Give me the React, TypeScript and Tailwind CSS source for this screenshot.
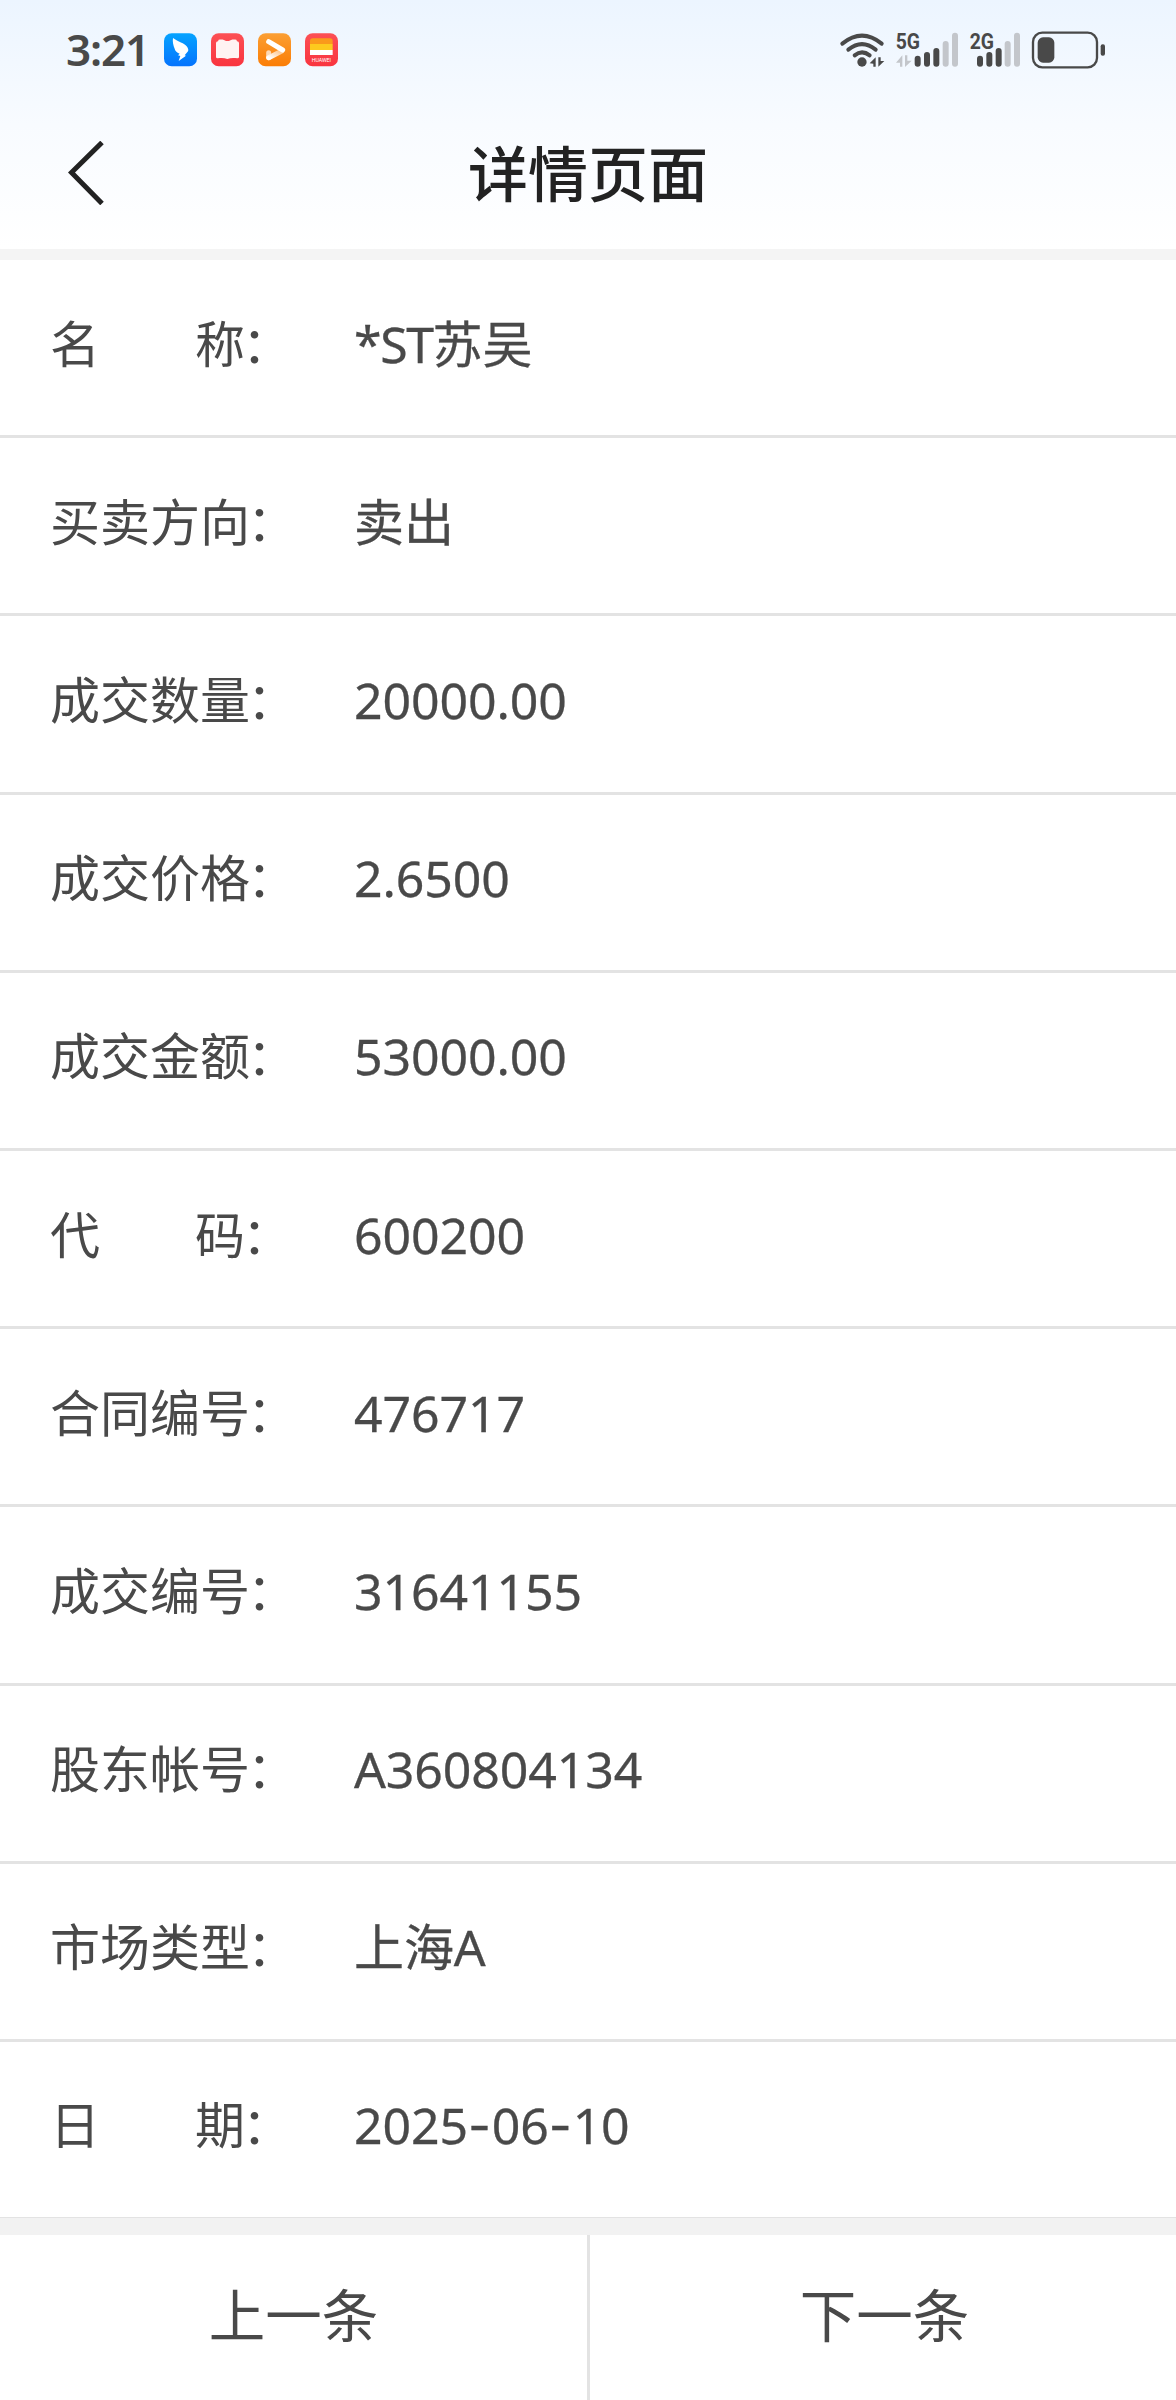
import type { ReactNode } from "react";

interface DetailRow {
    label: string;
    value: ReactNode;
}

const Dash = () => <span className="font-['Inter'] tracking-[0.8px]">-</span>;

const rows: DetailRow[] = [
    { label: "名称", value: <><span className="tracking-[-1.4px]">*ST</span>苏吴</> },
    { label: "买卖方向", value: "卖出" },
    { label: "成交数量", value: "20000.00" },
    { label: "成交价格", value: "2.6500" },
    { label: "成交金额", value: "53000.00" },
    { label: "代码", value: "600200" },
    { label: "合同编号", value: "476717" },
    { label: "成交编号", value: "31641155" },
    { label: "股东帐号", value: "A360804134" },
    { label: "市场类型", value: "上海A" },
    { label: "日期", value: <>2025<Dash />06<Dash />10</> },
];

// Notification icons on the left of the status bar
function AppIcons() {
    return (
        <svg width="174" height="34" viewBox="0 0 522 102" className="ml-[22px]">
            <defs>
                <linearGradient id="blue" x1="0" y1="0" x2="0" y2="1">
                    <stop offset="0" stopColor="#05a3ff" />
                    <stop offset="1" stopColor="#0573fd" />
                </linearGradient>
                <linearGradient id="red" x1="0" y1="0" x2="0" y2="1">
                    <stop offset="0" stopColor="#fc5055" />
                    <stop offset="1" stopColor="#f9343f" />
                </linearGradient>
                <linearGradient id="orange" x1="0" y1="0" x2="0" y2="1">
                    <stop offset="0" stopColor="#fb9f34" />
                    <stop offset="1" stopColor="#fb7d05" />
                </linearGradient>
                <linearGradient id="fold" x1="0" y1="1" x2="1" y2="0">
                    <stop offset="0" stopColor="#fff" />
                    <stop offset="1" stopColor="#fdc48a" />
                </linearGradient>
            </defs>
            <rect x="0" y="1" width="99" height="99" rx="23" fill="url(#blue)" />
            <path d="M27 15 C42 26 62 31 68 40 C73 47 74 51 72 55 L62 67 L66 68 L44 84 L49 69 L42 67 L47 62 C38 58 33 53 32 47 C28 38 25 26 27 15Z" fill="#fff" />
            <rect x="141" y="1" width="99" height="99" rx="23" fill="url(#red)" />
            <path d="M156 30 Q156 25 162 25 L164 20 C174 18 181 20 186 24 H195 C200 20 207 18 217 20 L219 25 Q225 25 225 30 V72 Q225 76 220 76 C210 74 199 74 190 78 C181 74 171 74 161 76 Q156 76 156 72Z" fill="#fff3f2" />
            <rect x="282" y="1" width="99" height="99" rx="23" fill="url(#orange)" />
            <path d="M314 59 V74" fill="none" stroke="#fdd9b5" strokeWidth="15" strokeLinecap="round" />
            <path d="M314 74 L352 55" fill="none" stroke="url(#fold)" strokeWidth="15" strokeLinecap="round" />
            <path d="M314 26 L356 51" fill="none" stroke="#fff" strokeWidth="15" strokeLinecap="round" />
            <rect x="423" y="1" width="99" height="99" rx="23" fill="url(#red)" />
            <path d="M438 34 V24 Q438 16 446 16 H498 Q506 16 506 24 V34Z" fill="#fa9a1b" />
            <rect x="438" y="33" width="68" height="18" fill="#fdca1e" />
            <rect x="438" y="51" width="68" height="15" fill="#fff" />
            <text x="443" y="88" fill="#fff" fontFamily="Roboto" fontSize="17" textLength="58" lengthAdjust="spacingAndGlyphs">HUAWEI</text>
        </svg>
    );
}

// Wifi, two SIM signals and battery
function SystemIcons() {
    return (
        <svg width="266" height="38" viewBox="0 0 798 114" fill="#494949" className="overflow-visible">
            <g fill="none" stroke="#494949" strokeWidth="12" strokeLinecap="round">
                <path d="M7 38 Q66 -10 125 38" />
                <path d="M25 56 Q66 23 107 56" />
                <path d="M44 73 Q66 55 89 73" />
            </g>
            <circle cx="66" cy="93" r="14" />
            <path d="M89 97 L107 79 V107 H100 V98Z M133 90 L115 107 V79 H122 V90Z" />
            <text x="167" y="55" fontFamily="Roboto" fontWeight="700" fontSize="68" textLength="73" lengthAdjust="spacingAndGlyphs">5G</text>
            <path d="M168 95 L187 73 V107 H180 V95Z M215 89 L195 108 V73 H202 V89Z" fill="#c3c6cb" />
            <g stroke="#494949" strokeWidth="18" strokeLinecap="round">
                <path d="M233 83 V98 M261 72 V98 M289 60 V98" />
                <path d="M420 83 V98 M448 72 V98 M476 60 V98" />
                <path d="M317 39 V98 M345 14 V98 M503 39 V98 M531 14 V98" stroke="#c3c6cb" />
            </g>
            <text x="389" y="55" fontFamily="Roboto" fontWeight="700" fontSize="68" textLength="73" lengthAdjust="spacingAndGlyphs">2G</text>
            <rect x="579" y="5" width="192" height="104" rx="28" fill="none" stroke="#494949" strokeWidth="7" />
            <rect x="593" y="19" width="50" height="76" rx="16" />
            <rect x="782" y="40" width="13" height="34" rx="6" />
        </svg>
    );
}

export default function App() {
    return (
        <div className="flex h-[2400px] w-[1176px] flex-col overflow-hidden bg-white font-['Noto_Sans','Noto_Sans_CJK_SC',sans-serif] text-[#494949]">
            <header className="h-[249px] bg-linear-to-b from-[#ecf5ff] via-[#f8fbff] to-white">
                <div className="flex h-[100px] items-center pl-[66px] pr-[70px]">
                    <span className="w-[76px] whitespace-nowrap pb-0.5 text-[44px] leading-none font-semibold tracking-[-1.2px]">3:21</span>
                    <AppIcons />
                    <div className="ml-auto">
                        <SystemIcons />
                    </div>
                </div>
                <div className="flex h-[149px] items-start">
                    <svg width="36" height="64" viewBox="0 0 36 64" className="mt-[41px] ml-[68px]" fill="none" stroke="#222" strokeWidth="5">
                        <path d="M34 1.5 L3.5 31.5 L34 62.5" />
                    </svg>
                    <h1 className="mt-[44px] ml-[364px] text-[60px] leading-[60px] font-medium text-[#222]">详情页面</h1>
                </div>
            </header>
            <div className="h-[11px] shrink-0 bg-[#f4f4f4]" />

            <main>
                {rows.map((row) => (
                    <div
                        key={row.label}
                        className="flex h-[178.2px] items-center border-b-3 border-[#e3e3e3] pb-[8px] pl-[50px] text-[50px] leading-none last:h-[176px] last:border-b"
                    >
                        <div className="flex w-[304px]">
                            <span className={row.label.length === 2 ? "flex w-[195px] justify-between" : "flex w-[200px] justify-between"}>
                                {row.label.split("").map((char) => (
                                    <span key={char}>{char}</span>
                                ))}
                            </span>
                            <span className="-ml-[3px]">：</span>
                        </div>
                        <span className="tracking-[-0.1px] [-webkit-text-stroke:0.3px]">{row.value}</span>
                    </div>
                ))}
            </main>
            <div className="h-[17px] shrink-0 bg-[#f2f2f2]" />

            <footer className="flex flex-1 text-[56.5px] leading-none">
                <button className="w-[590px] border-r-3 border-[#e3e3e3] pb-[3px]">上一条</button>
                <button className="flex-1 pb-[3px] pl-[3px]">下一条</button>
            </footer>
        </div>
    );
}
